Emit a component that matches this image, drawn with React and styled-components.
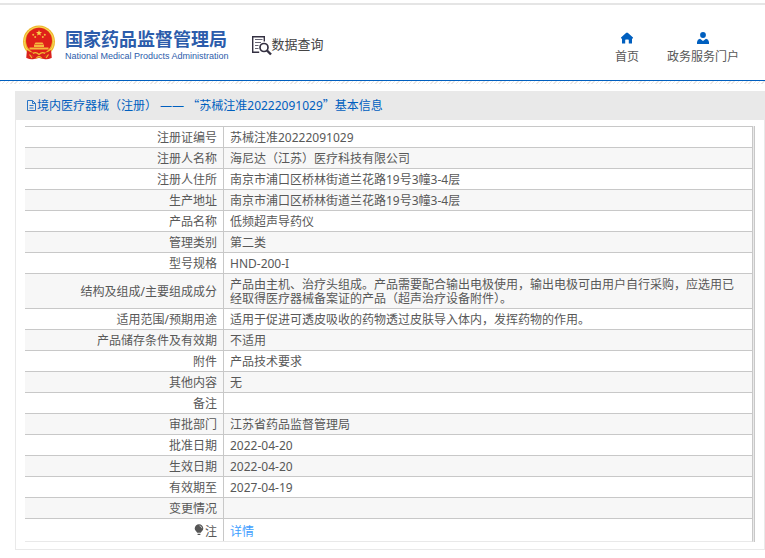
import React from 'react';
import styled, { createGlobalStyle } from 'styled-components';

const GlobalStyle = createGlobalStyle`
  * {
    box-sizing: border-box;
  }

  body {
    margin: 0;
    background: #fff;
    color: #585858;
    font-family: 'Noto Sans', 'Noto Sans CJK SC', sans-serif;
    font-size: 12px;
    line-height: 14px;
  }

  a {
    text-decoration: none;
  }
`;

const Header = styled.header`
  margin-top: 3px;
  border-top: 2px solid #e5e5e5;
  border-bottom: 1px solid #005fbf;
  padding: 20px 26px 16px 22px;
  display: flex;
  align-items: flex-start;
  justify-content: space-between;
`;

const Hatch = styled.div`
  height: 3px;
  background: repeating-linear-gradient(135deg, #ebe7e5 0 1px, #fff 1px 3px);
`;

const Brand = styled.div`
  display: flex;
  align-items: flex-start;
`;

const Logo = styled.a`
  display: flex;
  align-items: flex-start;
  gap: 9px;
  color: #2c5cab;
`;

const LogoText = styled.span`
  display: flex;
  flex-direction: column;
  gap: 2px;
  padding-top: 3px;
  white-space: nowrap;
`;

const LogoName = styled.strong`
  font-family: 'Noto Sans CJK SC', sans-serif;
  font-size: 18px;
  font-weight: 700;
  line-height: 20px;
`;

const LogoSub = styled.span`
  font-family: 'Liberation Sans', sans-serif;
  font-size: 9px;
  line-height: 12px;
`;

const Section = styled.a`
  display: flex;
  align-items: flex-start;
  margin: 10px 0 0 22px;
  color: #444;
  font-family: 'Noto Sans CJK SC', sans-serif;
  font-size: 13px;
  line-height: 18px;
  white-space: nowrap;
`;

const Nav = styled.nav`
  display: flex;
  gap: 28px;
  padding-top: 7px;
`;

const NavLink = styled.a`
  display: flex;
  flex-direction: column;
  align-items: center;
  gap: 6px;
  color: #585858;
  white-space: nowrap;

  svg {
    fill: #005fbf;
  }
`;

const Panel = styled.main`
  margin: 7px 0 8px 15px;
  border: 1px solid #e9e9e9;
  border-top: 0;
`;

const PanelTitle = styled.h1`
  display: flex;
  align-items: center;
  margin: 0;
  padding: 0 10px;
  background: #e9e9e9;
  color: #005fbf;
  font-size: 12px;
  font-weight: 400;
  line-height: 28px;
  white-space: pre;
`;

const Quote = styled.span`
  font-family: 'Noto Sans CJK SC', sans-serif;
`;

const TableFrame = styled.div`
  margin: 6px 9px 7px;
  border-right: 1px solid #c8c8c8;
  padding-right: 1px;
  background: #e9e9e9;
`;

const Table = styled.table`
  width: 100%;
  border-collapse: separate;
  border-spacing: 0;
  border-right: 1px solid #c8c8c8;
  border-bottom: 1px solid #e9e9e9;
  background: #fff;
`;

const Row = styled.tr`
  &:nth-child(even) {
    background: #f7f7f7;
  }
`;

const Label = styled.th`
  width: 199px;
  border-top: 1px solid #c8c8c8;
  border-right: 1px solid #c8c8c8;
  padding: 4px 6px 2px;
  font-weight: 400;
  text-align: right;
`;

const Value = styled.td`
  height: 21px;
  border-top: 1px solid #c8c8c8;
  padding: ${props => (props.$last ? '6px 16px 2px 6px' : '4px 16px 2px 6px')};
`;

const DetailLink = styled.a`
  color: #409eff;
`;

const rows = [
  ['注册证编号', '苏械注准20222091029'],
  ['注册人名称', '海尼达（江苏）医疗科技有限公司'],
  ['注册人住所', '南京市浦口区桥林街道兰花路19号3幢3-4层'],
  ['生产地址', '南京市浦口区桥林街道兰花路19号3幢3-4层'],
  ['产品名称', '低频超声导药仪'],
  ['管理类别', '第二类'],
  ['型号规格', 'HND-200-I'],
  ['结构及组成/主要组成成分', '产品由主机、治疗头组成。产品需要配合输出电极使用，输出电极可由用户自行采购，应选用已经取得医疗器械备案证的产品（超声治疗设备附件）。'],
  ['适用范围/预期用途', '适用于促进可透皮吸收的药物透过皮肤导入体内，发挥药物的作用。'],
  ['产品储存条件及有效期', '不适用'],
  ['附件', '产品技术要求'],
  ['其他内容', '无'],
  ['备注', ''],
  ['审批部门', '江苏省药品监督管理局'],
  ['批准日期', '2022-04-20'],
  ['生效日期', '2022-04-20'],
  ['有效期至', '2027-04-19'],
  ['变更情况', ''],
];

const Emblem = () => (
  <svg width="34" height="36" viewBox="0 0 34 36" aria-hidden="true">
    <path d="M5 25 L4.5 33 Q9 35 12 34 L17 33 L22 34 Q25 35 29.5 33 L29 25 Z" fill="#d9211c" />
    <circle cx="17" cy="16.5" r="16" fill="#eeb62b" />
    <circle cx="17" cy="16.5" r="14.6" fill="none" stroke="#f9d75c" strokeWidth="1" />
    <circle cx="17" cy="15.8" r="13" fill="#df2019" />
    <path d="M17 5 l.8 2 2.2.1 -1.7 1.4 .6 2.1 -1.9-1.2 -1.9 1.2 .6-2.1 -1.7-1.4 2.2-.1z" fill="#f8d34a" />
    <g fill="#f5b83c">
      <circle cx="11.2" cy="9.7" r="1" />
      <circle cx="13.2" cy="12" r="1" />
      <circle cx="20.8" cy="12" r="1" />
      <circle cx="22.8" cy="9.7" r="1" />
      <path d="M12.5 19l1-1.4h7l1 1.4zM12 19.5h10V22H12zM7.5 22.5h19v2h-19z" />
    </g>
    <path d="M5 25 Q10 29.5 17 27.5 Q24 29.5 29 25 L29.5 33 L24 30.5 L20 33.5 L17 31 L14 33.5 L10 30.5 L4.5 33 Z" fill="#d9211c" />
    <path d="M11 28.5 Q14 26.5 17 29.5 Q20 26.5 23 28.5 M14 33.5 Q17 29.5 20 33.5 M7.5 29.5l2.5 3.5 M26.5 29.5l-2.5 3.5" fill="none" stroke="#f2bd35" strokeWidth="1.2" />
  </svg>
);

const SearchDocIcon = () => (
  <svg width="21" height="21" viewBox="0 0 21 21" fill="none" stroke="#343142" aria-hidden="true">
    <path d="M13.3 6.5V1.7H1.7v15.6h6.5" strokeWidth="1.4" />
    <path d="M4 4.5h7.5M4 7.5h6M4 10.5h3.5M4 13.5h3.5" stroke="#666473" />
    <circle cx="13" cy="12.5" r="4" strokeWidth="1.7" />
    <path d="M16 15.5l4 4" strokeWidth="2.4" />
  </svg>
);

const HomeIcon = () => (
  <svg width="12" height="12" viewBox="0 0 12 12" aria-hidden="true">
    <path d="M6 0.5Q5.6.5 5 1L0 5.6V6.5h1v5h3.2V8.2q0-.7.7-.7h2.2q.7 0 .7.7v3.3H11v-5h1V5.6L7 1Q6.4.5 6 .5z" />
  </svg>
);

const UserIcon = () => (
  <svg width="12" height="12" viewBox="0 0 12 12" aria-hidden="true">
    <circle cx="6" cy="3" r="2.9" />
    <path d="M0 12V10Q.4 7.4 3 6.8L6 9 9 6.8Q11.6 7.4 12 10V12z" />
  </svg>
);

const FileIcon = () => (
  <svg width="11" height="12" viewBox="0 0 11 12" fill="none" stroke="#2a75c7" aria-hidden="true">
    <path d="M1.5 .5h5l3 3v7h-8zM6.5 .5v3h3M3.5 5.5h4M3.5 8h4" />
  </svg>
);

const BulbIcon = () => (
  <svg width="11" height="12" viewBox="0 0 11 12" aria-hidden="true">
    <path d="M5 .2a4.3 4.3 0 0 0-4.3 4.3C.7 6.6 2.5 7.3 3.2 8.8h3.6c.7-1.5 2.5-2.2 2.5-4.3A4.3 4.3 0 0 0 5 .2zM3.6 9.8h2.8v1.2H3.6z" fill="#555" />
    <path d="M5.5 1.8q2 .3 2.4 2.4" fill="none" stroke="#ddd" strokeWidth=".8" />
  </svg>
);

const App = () => (
  <>
    <GlobalStyle />
    <Header>
      <Brand>
        <Logo href="#">
          <Emblem />
          <LogoText>
            <LogoName>国家药品监督管理局</LogoName>
            <LogoSub>National Medical Products Administration</LogoSub>
          </LogoText>
        </Logo>
        <Section href="#">
          <SearchDocIcon />
          数据查询
        </Section>
      </Brand>
      <Nav>
        <NavLink href="#">
          <HomeIcon />
          首页
        </NavLink>
        <NavLink href="#">
          <UserIcon />
          政务服务门户
        </NavLink>
      </Nav>
    </Header>
    <Hatch />
    <Panel>
      <PanelTitle>
        <FileIcon />
        <span>
          境内医疗器械（注册） —— <Quote>“</Quote>苏械注准20222091029<Quote>”</Quote>基本信息
        </span>
      </PanelTitle>
      <TableFrame>
        <Table>
          <tbody>
            {rows.map(([label, value]) => (
              <Row key={label}>
                <Label scope="row">{label}</Label>
                <Value>{value}</Value>
              </Row>
            ))}
            <Row>
              <Label scope="row">
                <BulbIcon />注
              </Label>
              <Value $last>
                <DetailLink href="#">详情</DetailLink>
              </Value>
            </Row>
          </tbody>
        </Table>
      </TableFrame>
    </Panel>
  </>
);

export default App;
